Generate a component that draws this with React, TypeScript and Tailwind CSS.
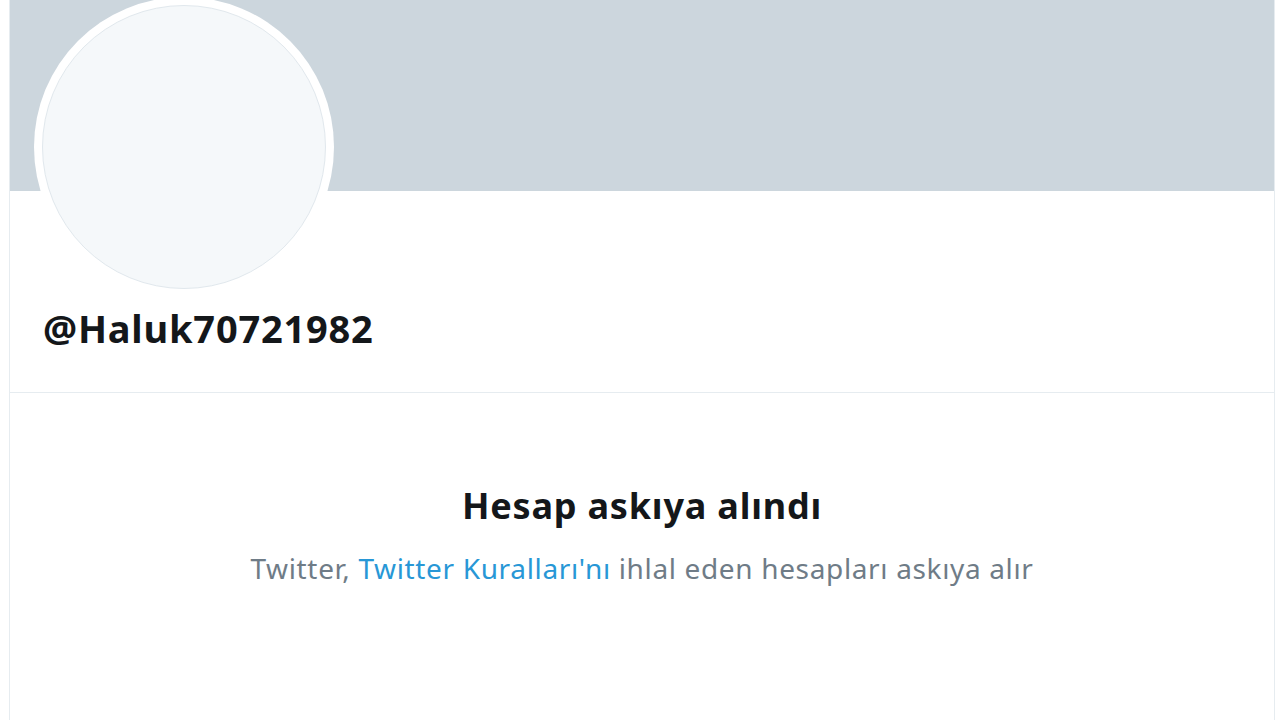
import React from "react";

export default function App() {
  return (
    <div className="w-[1280px] h-[720px] overflow-hidden bg-white" style={{ fontFamily: '"Noto Sans", "Open Sans", sans-serif' }}>
      <div className="ml-[9px] mr-[5px] h-full border-x border-[#e6ecf0] flex flex-col">
        <div className="relative h-[191px] bg-[#ccd6dd] shrink-0">
          <div className="absolute left-[24px] top-[-3px] w-[300px] h-[300px] rounded-full bg-white p-[8px]">
            <div className="w-full h-full rounded-full bg-[#f5f8fa] border border-[#e1e8ed]"></div>
          </div>
        </div>
        <div className="h-[202px] border-b border-[#e6ecf0] shrink-0 flex flex-col justify-end pb-[42px] pl-[33px]">
          <div className="text-[38px] leading-[44px] font-bold text-[#14171a] tracking-[0.8px]">@Haluk70721982</div>
        </div>
        <div className="flex flex-col items-center pt-[91px]">
          <div className="text-[36px] leading-[44px] font-bold text-[#14171a] tracking-[0.8px]">Hesap askıya alındı</div>
          <div className="mt-[22px] text-[28px] leading-[36px] text-[#6f7c87] tracking-[0.65px]">
            Twitter, <span className="text-[#2897d6]">Twitter Kuralları'nı</span> ihlal eden hesapları askıya alır
          </div>
        </div>
      </div>
    </div>
  );
}
